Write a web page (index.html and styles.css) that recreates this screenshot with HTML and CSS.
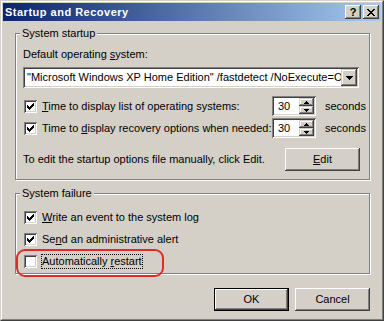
FILE: index.html
```html
<!DOCTYPE html>
<html>
<head>
<meta charset="utf-8">
<link rel="stylesheet" href="styles.css">
</head>
<body>
<div class="window">
  <div class="frame">
    <div class="titlebar">
      <span class="title">Startup and Recovery</span>
      <span class="tb-btn help">?</span>
      <span class="tb-btn close">
        <svg width="8" height="7" viewBox="0 0 8 7" shape-rendering="crispEdges"><path d="M0 0h2v1h-2zM6 0h2v1h-2zM1 1h2v1h-2zM5 1h2v1h-2zM2 2h4v1h-4zM3 3h2v1h-2zM2 4h4v1h-4zM1 5h2v1h-2zM5 5h2v1h-2zM0 6h2v1h-2zM6 6h2v1h-2z" fill="#000"/></svg>
      </span>
    </div>
    <div class="content">
      <fieldset class="group group-startup">
        <legend>System startup</legend>
        <div class="field-label">Default operating <u>s</u>ystem:</div>
        <div class="combo">
          <span class="combo-text">"Microsoft Windows XP Home Edition" /fastdetect /NoExecute=OptIn</span>
          <span class="combo-btn">
            <svg width="7" height="4" viewBox="0 0 7 4" shape-rendering="crispEdges"><path d="M0 0h7v1h-7zM1 1h5v1h-5zM2 2h3v1h-3zM3 3h1v1h-1z" fill="#000"/></svg>
          </span>
        </div>
        <div class="time-row first">
          <span class="check-label">
            <span class="check"><svg width="13" height="13" viewBox="0 0 13 13" shape-rendering="crispEdges"><path d="M3 5h1v3h-1zM4 6h1v3h-1zM5 7h1v3h-1zM6 6h1v3h-1zM7 5h1v3h-1zM8 4h1v3h-1zM9 3h1v3h-1z" fill="#000"/></svg></span>
            <span><u>T</u>ime to display list of operating systems:</span>
          </span>
          <span class="spin">
            <span class="spin-val">30</span>
            <span class="spin-btns">
              <span class="spin-btn"><svg width="5" height="3" viewBox="0 0 5 3" shape-rendering="crispEdges"><path d="M2 0h1v1h-1zM1 1h3v1h-3zM0 2h5v1h-5z" fill="#000"/></svg></span>
              <span class="spin-btn"><svg width="5" height="3" viewBox="0 0 5 3" shape-rendering="crispEdges"><path d="M0 0h5v1h-5zM1 1h3v1h-3zM2 2h1v1h-1z" fill="#000"/></svg></span>
            </span>
          </span>
          <span class="unit">seconds</span>
        </div>
        <div class="time-row">
          <span class="check-label">
            <span class="check"><svg width="13" height="13" viewBox="0 0 13 13" shape-rendering="crispEdges"><path d="M3 5h1v3h-1zM4 6h1v3h-1zM5 7h1v3h-1zM6 6h1v3h-1zM7 5h1v3h-1zM8 4h1v3h-1zM9 3h1v3h-1z" fill="#000"/></svg></span>
            <span>Time to <u>d</u>isplay recovery options when needed:</span>
          </span>
          <span class="spin">
            <span class="spin-val">30</span>
            <span class="spin-btns">
              <span class="spin-btn"><svg width="5" height="3" viewBox="0 0 5 3" shape-rendering="crispEdges"><path d="M2 0h1v1h-1zM1 1h3v1h-3zM0 2h5v1h-5z" fill="#000"/></svg></span>
              <span class="spin-btn"><svg width="5" height="3" viewBox="0 0 5 3" shape-rendering="crispEdges"><path d="M0 0h5v1h-5zM1 1h3v1h-3zM2 2h1v1h-1z" fill="#000"/></svg></span>
            </span>
          </span>
          <span class="unit">seconds</span>
        </div>
        <div class="edit-row">
          <span>To edit the startup options file manually, click Edit.</span>
          <span class="btn"><u>E</u>dit</span>
        </div>
      </fieldset>
      <fieldset class="group group-failure">
        <legend>System failure</legend>
        <div class="check-row first">
          <span class="check"><svg width="13" height="13" viewBox="0 0 13 13" shape-rendering="crispEdges"><path d="M3 5h1v3h-1zM4 6h1v3h-1zM5 7h1v3h-1zM6 6h1v3h-1zM7 5h1v3h-1zM8 4h1v3h-1zM9 3h1v3h-1z" fill="#000"/></svg></span>
          <span><u>W</u>rite an event to the system log</span>
        </div>
        <div class="check-row">
          <span class="check"><svg width="13" height="13" viewBox="0 0 13 13" shape-rendering="crispEdges"><path d="M3 5h1v3h-1zM4 6h1v3h-1zM5 7h1v3h-1zM6 6h1v3h-1zM7 5h1v3h-1zM8 4h1v3h-1zM9 3h1v3h-1z" fill="#000"/></svg></span>
          <span>Se<u>n</u>d an administrative alert</span>
        </div>
        <div class="check-row last">
          <span class="check"></span>
          <span class="focus">Automatically <u>r</u>estart</span>
          <span class="annot"></span>
        </div>
      </fieldset>
      <div class="footer">
        <span class="btn default">OK</span>
        <span class="btn">Cancel</span>
      </div>
    </div>
  </div>
</div>
</body>
</html>
```

FILE: styles.css
```css
* { box-sizing: border-box; }
html, body { margin: 0; padding: 0; }
body {
  width: 384px;
  height: 321px;
  overflow: hidden;
  background: #D4D0C8;
  color: #000;
  font-family: "Liberation Sans", Arial, sans-serif;
  font-size: 11px;
  line-height: 13px;
}
u { text-decoration: underline; text-underline-offset: 1px; }

.window {
  width: 384px;
  height: 321px;
  border: 1px solid;
  border-color: #D4D0C8 #404040 #404040 #D4D0C8;
}
.frame {
  height: 100%;
  border: 1px solid;
  border-color: #fff #808080 #808080 #fff;
  padding: 1px;
  display: flex;
  flex-direction: column;
}

.titlebar {
  height: 18px;
  flex: none;
  display: flex;
  align-items: center;
  padding: 0 2px;
  background: linear-gradient(to right, #0A246A, #A6CAF0);
}
.title {
  flex: 1;
  color: #fff;
  font-weight: bold;
  letter-spacing: 0.5px;
  line-height: 18px;
}
.tb-btn {
  width: 16px;
  height: 14px;
  display: flex;
  align-items: center;
  justify-content: center;
  background: #D4D0C8;
  box-shadow: inset -1px -1px #404040, inset 1px 1px #fff, inset -2px -2px #808080;
}
.tb-btn.help { font-weight: bold; font-size: 11px; line-height: 14px; }
.tb-btn.close { margin-left: 2px; }

.content {
  flex: 1;
  display: flex;
  flex-direction: column;
  padding: 6px 11px 0 12px;
}

.group {
  margin: 0;
  padding: 0;
  min-width: 0;
  border: 1px solid #808080;
  box-shadow: inset 1px 1px #fff, 1px 1px #fff;
}
.group legend {
  margin-left: 4px;
  padding: 0 2px;
  line-height: 13px;
  background: #D4D0C8;
}
.group-failure { margin-top: 7px; }

.field-label { margin: 8px 0 0 7px; }

.sunken {
  box-shadow: inset 1px 1px #808080, inset -1px -1px #fff, inset 2px 2px #404040, inset -2px -2px #D4D0C8;
}
.combo {
  margin: 6px 0 0 7px;
  width: 336px;
  height: 21px;
  padding: 2px;
  display: flex;
  background: #fff;
  box-shadow: inset 1px 1px #808080, inset -1px -1px #fff, inset 2px 2px #404040, inset -2px -2px #D4D0C8;
}
.combo-text {
  flex: 1;
  min-width: 0;
  overflow: hidden;
  white-space: nowrap;
  padding-left: 2px;
  line-height: 17px;
}
.combo-btn, .spin-btn {
  display: flex;
  align-items: center;
  justify-content: center;
  background: #D4D0C8;
  box-shadow: inset -1px -1px #404040, inset 1px 1px #D4D0C8, inset -2px -2px #808080, inset 2px 2px #fff;
}
.combo-btn { width: 16px; height: 17px; flex: none; }

.time-row {
  display: grid;
  grid-template-columns: 248px 44px auto;
  align-items: center;
  height: 20px;
  margin: 2px 0 0 8px;
}
.time-row.first { margin-top: 8px; }
.check-label { display: flex; align-items: center; }
.check {
  width: 13px;
  height: 13px;
  flex: none;
  margin-right: 5px;
  background: #fff;
  box-shadow: inset 1px 1px #808080, inset -1px -1px #fff, inset 2px 2px #404040, inset -2px -2px #D4D0C8;
}
.check svg { display: block; }
.spin {
  width: 44px;
  height: 20px;
  padding: 2px;
  display: flex;
  background: #fff;
  box-shadow: inset 1px 1px #808080, inset -1px -1px #fff, inset 2px 2px #404040, inset -2px -2px #D4D0C8;
}
.spin-val { flex: 1; padding-left: 4px; line-height: 16px; }
.spin-btns { width: 15px; display: flex; flex-direction: column; }
.spin-btn { flex: 1; }
.unit { margin-left: 9px; }

.edit-row {
  display: flex;
  align-items: center;
  justify-content: space-between;
  margin: 10px 9px 8px 7px;
}
.btn {
  width: 75px;
  height: 23px;
  display: flex;
  align-items: center;
  justify-content: center;
  background: #D4D0C8;
  box-shadow: inset -1px -1px #404040, inset 1px 1px #fff, inset -2px -2px #808080;
}
.btn.default {
  box-shadow: inset 0 0 0 1px #000, inset -2px -2px #404040, inset 2px 2px #fff, inset -3px -3px #808080;
}

.check-row {
  position: relative;
  display: flex;
  align-items: center;
  height: 22px;
  margin-left: 8px;
}
.check-row.first { margin-top: 6px; }
.check-row.last { margin-bottom: 1px; }
.focus {
  border: 1px dotted #000;
  margin-left: -1px;
}
.annot {
  position: absolute;
  left: -8px;
  top: -1px;
  width: 148px;
  height: 28px;
  border: 2px solid #E02A2A;
  border-radius: 9px;
}

.footer {
  display: flex;
  justify-content: flex-end;
  gap: 6px;
  margin-top: 14px;
}
```
